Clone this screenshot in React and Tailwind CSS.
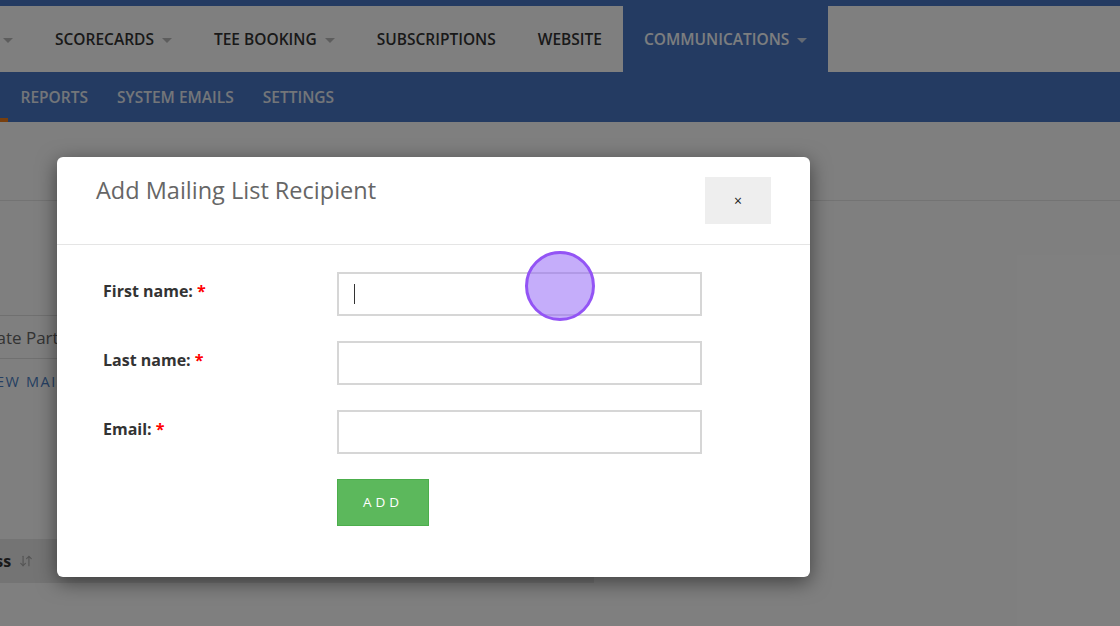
import { ArrowDownUp } from "lucide-react";

const Caret = ({ className = "ml-2 border-t-[#bbbbbb]" }) => (
  <span
    className={`inline-block h-0 w-0 border-x-[5px] border-t-[5px] border-x-transparent ${className}`}
  />
);

const NavItem = ({ label, caret }) => (
  <div className="flex items-center px-[21px] pt-[2px] text-[15.5px] font-semibold text-[#333]">
    {label}
    {caret && <Caret />}
  </div>
);

const SubNavItem = ({ label }) => (
  <div className="px-[14.5px] text-[15.5px] font-semibold text-[#f9f9f9] opacity-90">{label}</div>
);

const Field = ({ label, focused }) => (
  <div className="flex items-center">
    <label className="mb-[6px] w-[234px] text-[16px] font-bold text-[#333]">
      {label} <span className="text-[#ff0000]">*</span>
    </label>
    <div className="relative h-[44px] w-[365px] border-2 border-[#d6d6d6] bg-white">
      {focused && <span className="absolute left-[15px] top-[10px] h-[20px] w-px bg-[#333]" />}
    </div>
  </div>
);

export default function App() {
  return (
    <div className="relative h-[626px] w-[1120px] overflow-hidden bg-white font-['Open_Sans',sans-serif]">
      {/* Top strip */}
      <div className="h-[6px] bg-[#4876c4]" />

      {/* Main nav */}
      <div className="flex h-[66px] items-stretch bg-white">
        <div className="flex items-center pl-[3px] pr-[21px] pt-[2px]">
          <Caret className="border-t-[#bbbbbb]" />
        </div>
        <NavItem label="SCORECARDS" caret />
        <NavItem label="TEE BOOKING" caret />
        <NavItem label="SUBSCRIPTIONS" />
        <NavItem label="WEBSITE" />
        <div className="flex w-[205px] items-center bg-[#4876c4] pl-[21px] pt-[2px] text-[15.5px] font-semibold text-[#f8fcff]">
          COMMUNICATIONS
          <Caret className="ml-2 border-t-[#c9d4e6]" />
        </div>
      </div>

      {/* Sub nav */}
      <div className="relative flex h-[50px] items-center bg-[#4876c4] pl-[6px] pt-[1px]">
        <SubNavItem label="REPORTS" />
        <SubNavItem label="SYSTEM EMAILS" />
        <SubNavItem label="SETTINGS" />
        <span className="absolute bottom-0 left-0 h-[4px] w-[8px] bg-[#f07f1c]" />
      </div>

      {/* Page content behind */}
      <div className="h-[79px] border-b border-[#e6e6e6]" />
      <div className="ml-[-74px] w-[668px]">
        <div className="mt-[114px] flex h-[44px] items-center border-y border-[#e0e0e0] text-[17px] text-[#666]">
          <span className="pl-[15px] pt-[2px]">Corporate Partners</span>
        </div>
        <div className="mt-[12px] pl-[54px] text-[14.5px] tracking-[1.6px] text-[#4a7ec4]">VIEW MAILING LIST</div>
        <div className="mt-[146px] flex h-[44px] items-center bg-[#e8e8e8] pt-[1px] text-[16px] font-bold text-[#333]">
          <span className="ml-[-27px]">Email Address</span>
          <ArrowDownUp className="ml-[8px] h-[14px] w-[14px] text-[#aaa]" />
        </div>
      </div>

      {/* Overlay */}
      <div className="absolute inset-0 bg-black/50" />

      {/* Modal */}
      <div className="absolute left-[57px] top-[157px] h-[420px] w-[753px] rounded-[6px] bg-white shadow-[0_5px_20px_rgba(0,0,0,0.5)]">
        <div className="flex h-[88px] items-start justify-between border-b border-[#e5e5e5] pl-[39px] pr-[39px]">
          <h2 className="mt-[16px] text-[23.5px] font-normal text-[#666]">Add Mailing List Recipient</h2>
          <button className="mt-[20px] flex h-[47px] w-[66px] items-center justify-center bg-[#eeeeee] text-[14px] text-[#222]">
            ×
          </button>
        </div>
        <div className="flex flex-col gap-[25px] pl-[46px] pt-[27px]">
          <Field label="First name:" focused />
          <Field label="Last name:" />
          <Field label="Email:" />
          <div className="flex">
            <div className="w-[234px]" />
            <button className="h-[47px] w-[92px] border border-[#4cae4c] bg-[#5cb85c] text-[13.5px] tracking-[4px] text-white">
              ADD
            </button>
          </div>
        </div>
      </div>

      {/* Click indicator */}
      <div className="absolute left-[525px] top-[251px] h-[70px] w-[70px] rounded-full border-[3px] border-[#9354f5] bg-[#8b5cf6]/50" />
    </div>
  );
}
